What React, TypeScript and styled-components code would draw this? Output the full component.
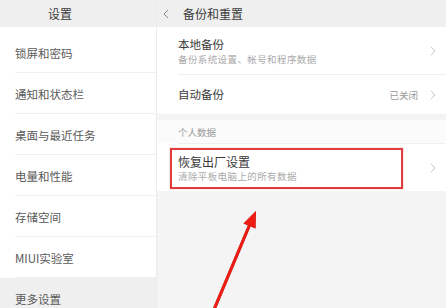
import styled, { createGlobalStyle } from "styled-components";

const GlobalStyle = createGlobalStyle`
  html, body {
    margin: 0;
    padding: 0;
    background: #f4f4f4;
  }
  body {
    font-family: "Noto Sans CJK SC", "Noto Sans", sans-serif;
  }
`;

const Screen = styled.div`
  position: relative;
  width: 446px;
  height: 308px;
  display: flex;
  overflow: hidden;
  background: #f4f4f4;
`;

const Sidebar = styled.div`
  width: 157px;
  flex-shrink: 0;
  display: flex;
  flex-direction: column;
  background: #fff;
  border-right: 1px solid #ececec;
  box-sizing: border-box;
`;

const Header = styled.div`
  height: 27px;
  flex-shrink: 0;
  display: flex;
  align-items: center;
  background: #efefef;
  color: #3a3a3a;
  font-size: 12px;
  box-sizing: border-box;
`;

const SideHeader = styled(Header)`
  padding-left: 48px;
`;

const MainHeader = styled(Header)`
  padding-left: 6px;
  gap: 14px;
`;

const SideList = styled.div`
  padding-top: 5px;
  display: flex;
  flex-direction: column;
`;

const SideItem = styled.div<{ $active?: boolean }>`
  height: 41px;
  flex-shrink: 0;
  display: flex;
  align-items: center;
  padding-left: 15px;
  font-size: 11.5px;
  color: #5a5a5a;
  background: ${(p) => (p.$active ? "#efefef" : "#fff")};
  position: relative;
  &::after {
    content: "";
    position: absolute;
    left: 15px;
    right: 0;
    bottom: 0;
    height: 1px;
    background: ${(p) => (p.$active ? "transparent" : "#f1f1f1")};
  }
`;

const Main = styled.div`
  flex: 1;
  display: flex;
  flex-direction: column;
`;

const Group = styled.div`
  background: #fff;
  display: flex;
  flex-direction: column;
  margin-bottom: 6px;
`;

const Row = styled.div<{ $h: number }>`
  position: relative;
  height: ${(p) => p.$h}px;
  display: flex;
  align-items: center;
  padding: 0 8px 0 21px;
  box-sizing: border-box;
`;

const Divider = styled.div`
  height: 1px;
  margin-left: 21px;
  background: #f0f0f0;
`;

const Texts = styled.div`
  flex: 1;
  display: flex;
  flex-direction: column;
  gap: 1px;
`;

const Title = styled.div<{ $size?: number }>`
  font-size: ${(p) => p.$size ?? 11.5}px;
  line-height: 15px;
  color: #3a3a3a;
`;

const Sub = styled.div`
  font-size: 9.5px;
  line-height: 12px;
  color: #aaa;
  letter-spacing: 0.4px;
`;

const Value = styled.span`
  font-size: 9.5px;
  color: #999;
  margin-right: 12px;
`;

const Chevron = styled.svg`
  flex-shrink: 0;
  margin-right: 2px;
`;

const GroupLabel = styled.div`
  height: 23px;
  display: flex;
  align-items: center;
  padding-left: 21px;
  font-size: 9.5px;
  color: #999;
  background: #fbfbfb;
`;

const Highlight = styled.div`
  position: absolute;
  left: 13px;
  top: 4px;
  width: 233px;
  height: 41px;
  border: 2px solid #e23b3b;
  box-shadow: 0 0 1px rgba(200, 30, 30, 0.6);
  box-sizing: border-box;
  pointer-events: none;
`;

const Arrow = styled.svg`
  position: absolute;
  left: 0;
  top: 0;
  pointer-events: none;
`;

const sideItems = ["锁屏和密码", "通知和状态栏", "桌面与最近任务", "电量和性能", "存储空间", "MIUI实验室", "更多设置"];

const Right = () => (
  <Chevron width="6" height="10" viewBox="0 0 6 10">
    <polyline points="0.8,0.8 5,5 0.8,9.2" fill="none" stroke="#c8c8c8" strokeWidth="1" />
  </Chevron>
);

export default function App() {
  return (
    <>
      <GlobalStyle />
      <Screen>
        <Sidebar>
          <SideHeader>设置</SideHeader>
          <SideList>
            {sideItems.map((s, i) => (
              <SideItem key={s} $active={i === sideItems.length - 1}>
                {s}
              </SideItem>
            ))}
          </SideList>
        </Sidebar>
        <Main>
          <MainHeader>
            <svg width="6" height="10" viewBox="0 0 6 10">
              <polyline points="5.2,0.8 1,5 5.2,9.2" fill="none" stroke="#888" strokeWidth="1" />
            </svg>
            备份和重置
          </MainHeader>
          <Group>
            <Row $h={47}>
              <Texts>
                <Title>本地备份</Title>
                <Sub>备份系统设置、帐号和程序数据</Sub>
              </Texts>
              <Right />
            </Row>
            <Divider />
            <Row $h={39}>
              <Texts>
                <Title>自动备份</Title>
              </Texts>
              <Value>已关闭</Value>
              <Right />
            </Row>
          </Group>
          <Group>
            <GroupLabel>个人数据</GroupLabel>
            <Divider />
            <Row $h={47}>
              <Texts>
                <Title $size={12}>恢复出厂设置</Title>
                <Sub>清除平板电脑上的所有数据</Sub>
              </Texts>
              <Right />
              <Highlight />
            </Row>
          </Group>
        </Main>
        <Arrow width="446" height="308" viewBox="0 0 446 308">
          <g style={{ filter: "drop-shadow(0 0 0.6px rgba(80,0,0,0.7))" }}>
            <line x1="213" y1="312" x2="250" y2="224" stroke="#ee1c14" strokeWidth="3" />
            <polygon points="256,211 255.5,228.5 243.5,223.5" fill="#ee1c14" />
          </g>
        </Arrow>
      </Screen>
    </>
  );
}
